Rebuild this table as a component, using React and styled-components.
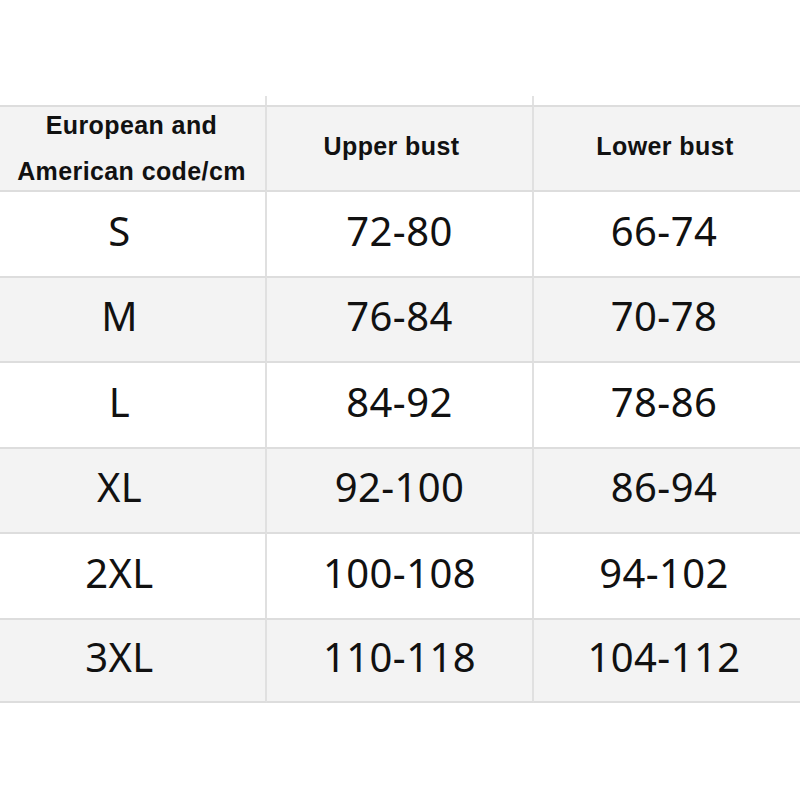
import React from "react";
import styled, { createGlobalStyle } from "styled-components";

const Global = createGlobalStyle`
  html, body { margin: 0; padding: 0; background: #ffffff; }
  body { width: 800px; height: 800px; overflow: hidden; }
`;

const Page = styled.div`
  width: 800px;
  height: 800px;
  padding-top: 96px;
  box-sizing: border-box;
  background: #fff;
`;

const Table = styled.div`
  display: grid;
  grid-template-columns: 267px 267px 266px;
  grid-template-rows: 9px 85px repeat(6, 85.5px);
`;

const Stub = styled.div`
  border-right: ${(p) => (p.$last ? "none" : "2px solid #e2e2e2")};
`;

const Cell = styled.div`
  display: flex;
  align-items: center;
  justify-content: center;
  box-sizing: border-box;
  background: ${(p) => (p.$shade ? "#f3f3f3" : "#ffffff")};
  border-top: 2px solid #dddddd;
  border-bottom: ${(p) => (p.$bottom ? "2px solid #dddddd" : "none")};
  border-right: ${(p) => (p.$last ? "none" : "2px solid #e0e0e0")};
  padding-right: ${(p) => p.$pr || 0}px;
  padding-bottom: ${(p) => p.$pb || 0}px;
`;

const HeadText = styled.div`
  font-family: "Liberation Sans", Arial, sans-serif;
  font-weight: 700;
  font-size: 25px;
  letter-spacing: 0.4px;
  line-height: 46px;
  color: #111;
  text-align: center;
  white-space: nowrap;
`;

const BodyText = styled.div`
  font-family: "Noto Sans", "Open Sans", sans-serif;
  font-size: 40px;
  line-height: 1;
  color: #111;
  letter-spacing: 0.4px;
  white-space: nowrap;
`;

const rows = [
  ["S", "72-80", "66-74"],
  ["M", "76-84", "70-78"],
  ["L", "84-92", "78-86"],
  ["XL", "92-100", "86-94"],
  ["2XL", "100-108", "94-102"],
  ["3XL", "110-118", "104-112"],
];

const offsets = [26, 0, 6];

export default function App() {
  return (
    <Page>
      <Global />
      <Table>
        <Stub />
        <Stub />
        <Stub $last />
        <Cell $shade $pr={2} $pb={2}>
          <HeadText>
            European and
            <br />
            American code/cm
          </HeadText>
        </Cell>
        <Cell $shade $pr={16} $pb={6}>
          <HeadText>Upper bust</HeadText>
        </Cell>
        <Cell $shade $last $pr={4} $pb={6}>
          <HeadText>Lower bust</HeadText>
        </Cell>
        {rows.map((r, i) =>
          r.map((v, j) => (
            <Cell
              key={`${i}-${j}`}
              $shade={i % 2 === 1}
              $last={j === 2}
              $bottom={i === rows.length - 1}
              $pr={offsets[j]}
              $pb={6}
            >
              <BodyText>{v}</BodyText>
            </Cell>
          ))
        )}
      </Table>
    </Page>
  );
}
